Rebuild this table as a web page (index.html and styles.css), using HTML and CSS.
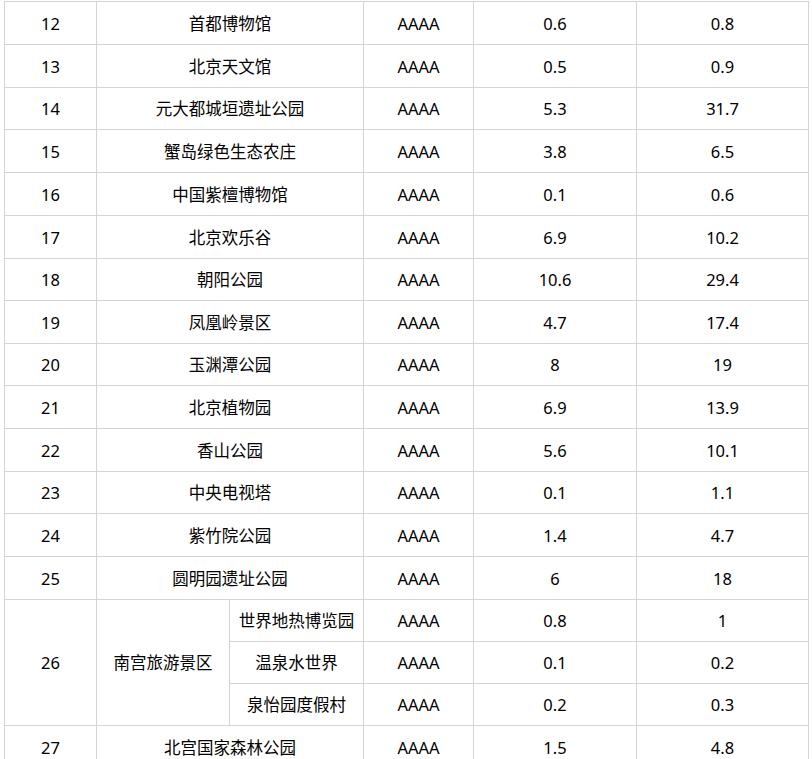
FILE: index.html
```html
<!DOCTYPE html>
<html lang="zh-CN">
<head>
<meta charset="utf-8">
<title>景区统计</title>
<link rel="stylesheet" href="styles.css">
</head>
<body>
<table class="data">
  <colgroup>
    <col class="c-no">
    <col class="c-name-a">
    <col class="c-name-b">
    <col class="c-level">
    <col class="c-v1">
    <col class="c-v2">
  </colgroup>
  <tbody>
    <tr class="r43"><td>12</td><td colspan="2">首都博物馆</td><td>AAAA</td><td>0.6</td><td>0.8</td></tr>
    <tr class="r43"><td>13</td><td colspan="2">北京天文馆</td><td>AAAA</td><td>0.5</td><td>0.9</td></tr>
    <tr class="r42"><td>14</td><td colspan="2">元大都城垣遗址公园</td><td>AAAA</td><td>5.3</td><td>31.7</td></tr>
    <tr class="r43"><td>15</td><td colspan="2">蟹岛绿色生态农庄</td><td>AAAA</td><td>3.8</td><td>6.5</td></tr>
    <tr class="r43"><td>16</td><td colspan="2">中国紫檀博物馆</td><td>AAAA</td><td>0.1</td><td>0.6</td></tr>
    <tr class="r43"><td>17</td><td colspan="2">北京欢乐谷</td><td>AAAA</td><td>6.9</td><td>10.2</td></tr>
    <tr class="r42"><td>18</td><td colspan="2">朝阳公园</td><td>AAAA</td><td>10.6</td><td>29.4</td></tr>
    <tr class="r43"><td>19</td><td colspan="2">凤凰岭景区</td><td>AAAA</td><td>4.7</td><td>17.4</td></tr>
    <tr class="r42"><td>20</td><td colspan="2">玉渊潭公园</td><td>AAAA</td><td>8</td><td>19</td></tr>
    <tr class="r43"><td>21</td><td colspan="2">北京植物园</td><td>AAAA</td><td>6.9</td><td>13.9</td></tr>
    <tr class="r43"><td>22</td><td colspan="2">香山公园</td><td>AAAA</td><td>5.6</td><td>10.1</td></tr>
    <tr class="r42"><td>23</td><td colspan="2">中央电视塔</td><td>AAAA</td><td>0.1</td><td>1.1</td></tr>
    <tr class="r43"><td>24</td><td colspan="2">紫竹院公园</td><td>AAAA</td><td>1.4</td><td>4.7</td></tr>
    <tr class="r43"><td>25</td><td colspan="2">圆明园遗址公园</td><td>AAAA</td><td>6</td><td>18</td></tr>
    <tr class="r42"><td rowspan="3">26</td><td rowspan="3">南宫旅游景区</td><td>世界地热博览园</td><td>AAAA</td><td>0.8</td><td>1</td></tr>
    <tr class="r42"><td>温泉水世界</td><td>AAAA</td><td>0.1</td><td>0.2</td></tr>
    <tr class="r42"><td>泉怡园度假村</td><td>AAAA</td><td>0.2</td><td>0.3</td></tr>
    <tr class="r43"><td>27</td><td colspan="2">北宫国家森林公园</td><td>AAAA</td><td>1.5</td><td>4.8</td></tr>
  </tbody>
</table>
</body>
</html>
```
FILE: styles.css
```css
html, body {
  margin: 0;
  padding: 0;
  background: #ffffff;
}

body {
  padding: 1px 0 0 4px;
  font-family: "Noto Sans", "Noto Sans CJK SC", sans-serif;
  font-size: 16.5px;
  color: #000000;
}

.data {
  table-layout: fixed;
  width: 805px;
  border-collapse: separate;
  border-spacing: 0;
  border-top: 1px solid #d4d4d4;
  border-left: 1px solid #d4d4d4;
}

.c-no { width: 92px; }
.c-name-a { width: 133px; }
.c-name-b { width: 134px; }
.c-level { width: 110px; }
.c-v1 { width: 163px; }
.c-v2 { width: 172px; }

.data td {
  padding: 2px 0 0;
  text-align: center;
  vertical-align: middle;
  white-space: nowrap;
  border-right: 1px solid #d4d4d4;
  border-bottom: 1px solid #d4d4d4;
  line-height: 1;
}

.r43 { height: 43px; }
.r42 { height: 42px; }
```
